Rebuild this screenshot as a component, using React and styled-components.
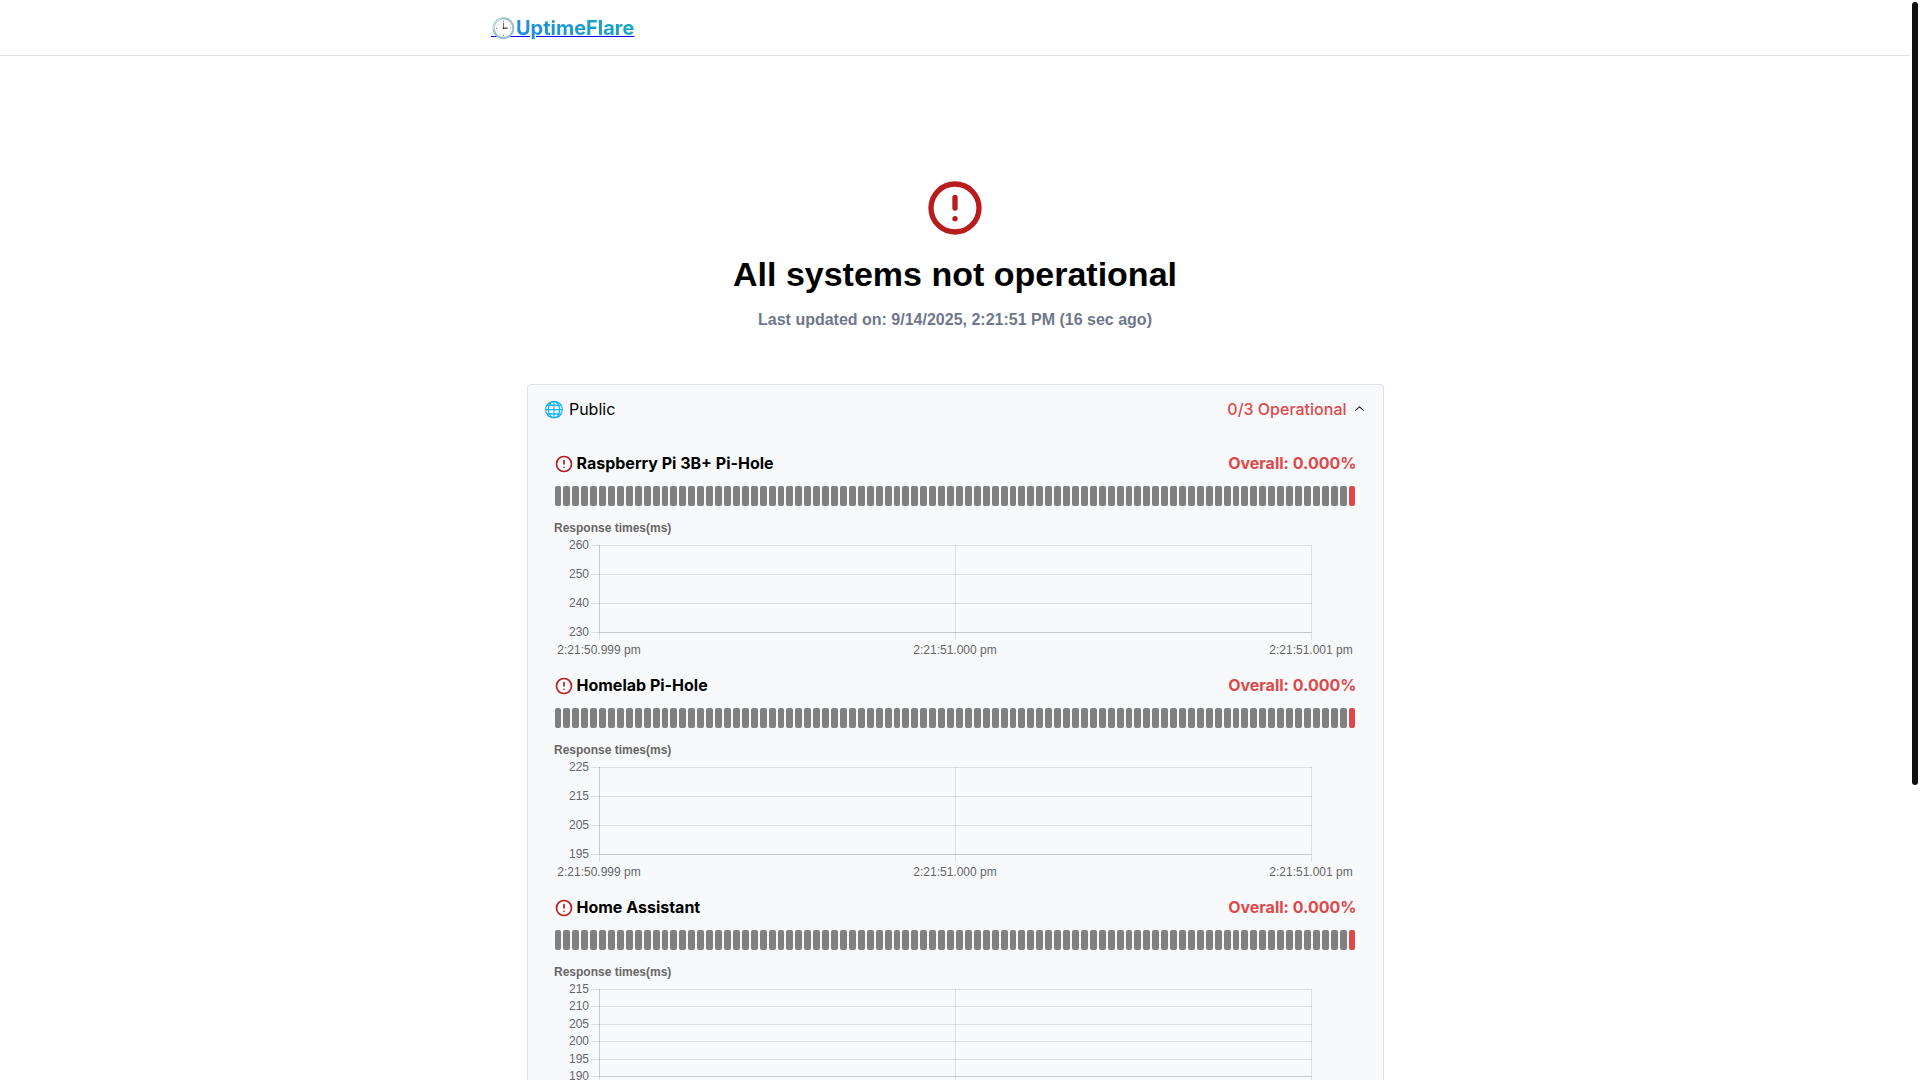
import React, { useState } from "react";
import styled, { createGlobalStyle } from "styled-components";

const GlobalStyle = createGlobalStyle`
    *, *::before, *::after {
        box-sizing: border-box;
    }
    body {
        margin: 0;
        background-color: #fff;
        color: #000;
        font-family: Inter, "Liberation Sans", "Noto Color Emoji", sans-serif;
        font-size: 16px;
        line-height: 25px;
    }
`;

const Shell = styled.div`
    height: 100vh;
    overflow: hidden;
    padding-right: 10px;
`;

const ScrollThumb = styled.div`
    position: fixed;
    top: 2px;
    right: 2px;
    width: 6px;
    height: calc(72.6vh - 1px);
    border-radius: 3px;
    background-color: #111;
`;

const Header = styled.header`
    height: 56px;
    border-bottom: 1px solid #dee2e6;
`;

const HeaderInner = styled.div`
    display: flex;
    align-items: center;
    height: 100%;
    max-width: 960px;
    margin: 0 auto;
    padding: 2px 16px 0;
`;

const Brand = styled.a`
    color: #0000ee;
`;

const BrandIcon = styled.span`
    font-size: 20px;
    line-height: 31px;
    font-weight: 700;
`;

const BrandName = styled(BrandIcon)`
    background-image: linear-gradient(45deg, #228be6 0%, #15aabf 100%);
    background-clip: text;
    -webkit-background-clip: text;
    -webkit-text-fill-color: transparent;
`;

const Overall = styled.section`
    display: flex;
    flex-direction: column;
    align-items: center;
    padding-top: 120px;
    font-family: "Liberation Sans", Arial, sans-serif;
`;

const Title = styled.h1`
    margin: 12px 0;
    font-size: 34px;
    line-height: 44px;
    font-weight: 700;
`;

const Updated = styled.h2`
    margin: 0;
    font-size: 16px;
    line-height: 24px;
    font-weight: 700;
    color: #70778c;
`;

const Group = styled.section`
    max-width: 857px;
    margin: 52px auto 0;
    border: 1px solid #dee2e6;
    border-radius: 4px;
    background-color: #f8f9fb;
`;

const GroupToggle = styled.button`
    display: flex;
    align-items: center;
    width: 100%;
    padding: 12px 16px 12px 17px;
    border: 0;
    background: none;
    color: inherit;
    font: inherit;
    text-align: left;
    cursor: pointer;
`;

const GroupName = styled.span`
    flex: 1;
`;

const GroupState = styled.span`
    margin-right: 5px;
    font-weight: 500;
    color: #df484a;
`;

const Chevron = styled.svg`
    display: block;
    width: 15px;
    height: 15px;
    transform: ${props => (props.$open ? "rotate(180deg)" : "none")};
`;

const GroupBody = styled.div`
    padding: 17px 26px 16px;
`;

const Monitor = styled.article`
    margin-bottom: 5px;
`;

const MonitorHead = styled.div`
    display: flex;
    align-items: center;
    justify-content: space-between;
    font-weight: 700;
`;

const MonitorName = styled.h3`
    display: flex;
    align-items: center;
    gap: 3px;
    margin: 0;
    font-size: 16px;
    font-weight: 700;
`;

const Uptime = styled.span`
    color: #df484a;
`;

const Days = styled.div`
    display: flex;
    margin-top: 10px;
`;

const Day = styled.div`
    width: 7px;
    height: 20px;
    margin: 0 1px;
    border-radius: 2px;
    background-color: ${props => (props.$down ? "#df484a" : "#808080")};
`;

const ChartSvg = styled.svg`
    display: block;
    width: 100%;
    margin-top: 12px;
    font-family: "Liberation Sans", Arial, sans-serif;
    font-size: 12px;
    fill: #666;

    line {
        stroke: rgba(0, 0, 0, 0.1);
        shape-rendering: crispEdges;
    }
`;

const monitors = [
    { name: "Raspberry Pi 3B+ Pi-Hole", ticks: [260, 250, 240, 230] },
    { name: "Homelab Pi-Hole", ticks: [225, 215, 205, 195] },
    { name: "Home Assistant", ticks: [215, 210, 205, 200, 195, 190] },
];

const times = ["2:21:50.999 pm", "2:21:51.000 pm", "2:21:51.001 pm"];

const DAY_COUNT = 90;

const LEFT = 45;
const RIGHT = 757;
const TOP = 27;
const BOTTOM = 114;

const AlertIcon = ({ size }) => (
    <svg
        width={size}
        height={size}
        viewBox="0 0 24 24"
        fill="none"
        stroke="#b91c1c"
        strokeWidth="2"
        strokeLinecap="round"
        strokeLinejoin="round"
        aria-hidden="true"
    >
        <path d="M3 12a9 9 0 1 0 18 0a9 9 0 0 0 -18 0" />
        <path d="M12 8v4" />
        <path d="M12 16h.01" />
    </svg>
);

const ResponseChart = ({ ticks }) => {
    const step = (BOTTOM - TOP) / (ticks.length - 1);

    return (
        <ChartSvg viewBox="0 0 803 150" role="img" aria-label="Response times(ms)">
            <text x="0" y="14" fontWeight="700">Response times(ms)</text>
            {ticks.map((tick, i) => {
                const y = Math.round(TOP + i * step);
                return (
                    <g key={tick}>
                        <line x1={LEFT - 8} x2={RIGHT + 1} y1={y + 0.5} y2={y + 0.5} />
                        <text x={LEFT - 10} y={y + 4} textAnchor="end">{tick}</text>
                    </g>
                );
            })}
            {times.map((time, i) => {
                const x = LEFT + i * ((RIGHT - LEFT) / 2);
                return (
                    <g key={time}>
                        <line x1={x + 0.5} x2={x + 0.5} y1={TOP} y2={BOTTOM + 8} />
                        <text x={x} y={BOTTOM + 22} textAnchor="middle">{time}</text>
                    </g>
                );
            })}
            {/* axis borders go over the grid, so they come out darker */}
            <line x1={LEFT + 0.5} x2={LEFT + 0.5} y1={TOP} y2={BOTTOM} />
            <line x1={LEFT} x2={RIGHT} y1={BOTTOM + 0.5} y2={BOTTOM + 0.5} />
        </ChartSvg>
    );
};

const MonitorDetail = ({ name, ticks }) => (
    <Monitor>
        <MonitorHead>
            <MonitorName>
                <AlertIcon size={20} />
                {name}
            </MonitorName>
            <Uptime>Overall: 0.000%</Uptime>
        </MonitorHead>
        <Days>
            {Array.from({ length: DAY_COUNT }, (_, i) => (
                <Day key={i} $down={i === DAY_COUNT - 1} />
            ))}
        </Days>
        <ResponseChart ticks={ticks} />
    </Monitor>
);

export default () => {
    const [open, setOpen] = useState(true);

    return (
        <Shell>
            <GlobalStyle />
            <Header>
                <HeaderInner>
                    <Brand href="#">
                        <BrandIcon>🕒</BrandIcon>
                        <BrandName>UptimeFlare</BrandName>
                    </Brand>
                </HeaderInner>
            </Header>
            <main>
                <Overall>
                    <AlertIcon size={64} />
                    <Title>All systems not operational</Title>
                    <Updated>Last updated on: 9/14/2025, 2:21:51 PM (16 sec ago)</Updated>
                </Overall>
                <Group>
                    <GroupToggle aria-expanded={open} onClick={() => setOpen(!open)}>
                        <GroupName>🌐 Public</GroupName>
                        <GroupState>0/3 Operational</GroupState>
                        <Chevron $open={open} viewBox="0 0 15 15" aria-hidden="true">
                            <path
                                d="M3.135 6.158C3.324 5.957 3.641 5.946 3.842 6.135L7.5 9.565L11.158 6.135C11.36 5.946 11.676 5.957 11.865 6.158C12.054 6.359 12.043 6.676 11.842 6.865L7.842 10.615C7.65 10.795 7.35 10.795 7.158 10.615L3.158 6.865C2.957 6.676 2.946 6.359 3.135 6.158Z"
                                fill="currentColor"
                                fillRule="evenodd"
                                clipRule="evenodd"
                            />
                        </Chevron>
                    </GroupToggle>
                    {open && (
                        <GroupBody>
                            {monitors.map(monitor => (
                                <MonitorDetail key={monitor.name} {...monitor} />
                            ))}
                        </GroupBody>
                    )}
                </Group>
            </main>
            <ScrollThumb />
        </Shell>
    );
};
